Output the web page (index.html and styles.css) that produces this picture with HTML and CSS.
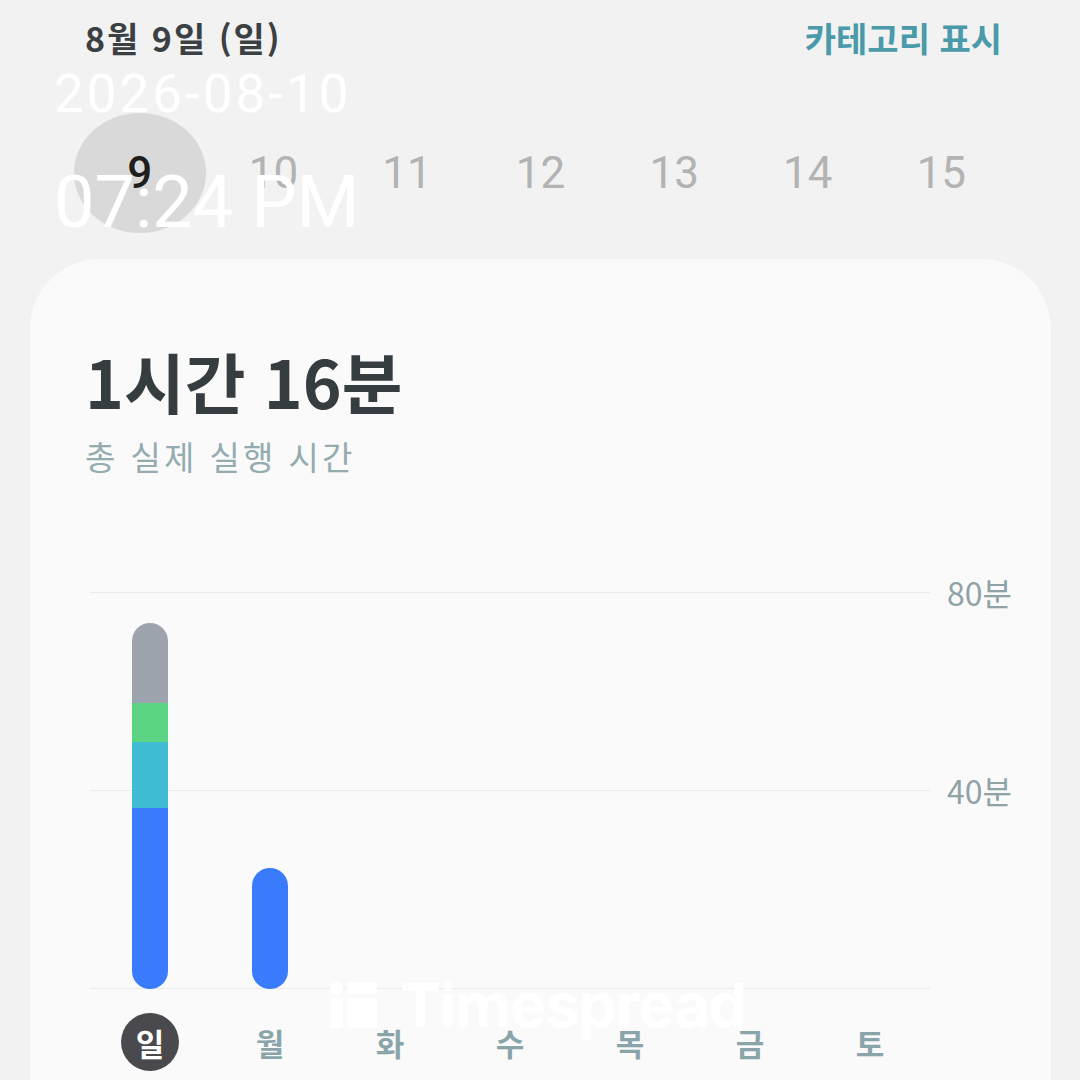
FILE: index.html
```html
<!DOCTYPE html>
<html lang="ko">

<head>
    <meta charset="UTF-8">
    <meta name="viewport" content="width=device-width, initial-scale=1.0">
    <title>Timespread</title>
    <link rel="stylesheet" href="styles.css">
</head>

<body>
    <div class="screen">
        <div class="header">
            <span class="header-date">8월 9일 (일)</span>
            <span class="header-action">카테고리 표시</span>
        </div>

        <div class="date-row">
            <div class="date-item selected"><span class="date-circle">9</span></div>
            <div class="date-item">10</div>
            <div class="date-item">11</div>
            <div class="date-item">12</div>
            <div class="date-item">13</div>
            <div class="date-item">14</div>
            <div class="date-item">15</div>
        </div>

        <div class="card">
            <h1 class="total">1시간 16분</h1>
            <p class="total-label">총 실제 실행 시간</p>

            <div class="chart">
                <div class="plot">
                    <div class="grid-lines">
                        <div class="grid-row"></div>
                        <div class="grid-row"></div>
                    </div>
                    <div class="bars">
                        <div class="bar-col">
                            <div class="bar" style="height: 366px;">
                                <div class="seg seg-gray" style="height: 80px;"></div>
                                <div class="seg seg-green" style="height: 39px;"></div>
                                <div class="seg seg-teal" style="height: 66px;"></div>
                                <div class="seg seg-blue" style="height: 181px;"></div>
                            </div>
                        </div>
                        <div class="bar-col">
                            <div class="bar" style="height: 121px;">
                                <div class="seg seg-blue" style="height: 121px;"></div>
                            </div>
                        </div>
                        <div class="bar-col"></div>
                        <div class="bar-col"></div>
                        <div class="bar-col"></div>
                        <div class="bar-col"></div>
                        <div class="bar-col"></div>
                    </div>
                </div>
                <div class="axis">
                    <span class="axis-label first">80분</span>
                    <span class="axis-label">40분</span>
                </div>
            </div>

            <div class="days">
                <span class="day today">일</span>
                <span class="day">월</span>
                <span class="day">화</span>
                <span class="day">수</span>
                <span class="day">목</span>
                <span class="day">금</span>
                <span class="day">토</span>
            </div>
        </div>

        <!-- overlays -->
        <div class="stamp">
            <div class="stamp-date">2026-08-10</div>
            <div class="stamp-time">07:24 PM</div>
        </div>

        <div class="watermark">
            <svg width="48" height="46" viewBox="0 0 48 46">
                <circle cx="6.5" cy="6.5" r="6.5" fill="#fff" />
                <rect x="0" y="16" width="13" height="30" rx="1" fill="#fff" />
                <rect x="17" y="0" width="30" height="12" rx="1" fill="#fff" />
                <rect x="17" y="16" width="30" height="30" rx="1" fill="#fff" />
            </svg>
            <span>Timespread</span>
        </div>
    </div>
</body>

</html>
```

FILE: styles.css
```css
body {
    margin: 0;
    padding: 0;
    background: #f2f2f2;
    font-family: "Noto Sans CJK KR", "Noto Sans", sans-serif;
}

.screen {
    position: relative;
    width: 1080px;
    height: 1080px;
    overflow: hidden;
}

.header {
    display: flex;
    justify-content: space-between;
    align-items: center;
    height: 74px;
    padding: 0 78px 0 85px;
}

.header-date {
    font-size: 34px;
    font-weight: bold;
    color: #3b4043;
    letter-spacing: 2px;
}

.header-action {
    font-size: 34px;
    font-weight: bold;
    color: #4a9aaa;
}

.date-row {
    display: flex;
    margin-top: 39px;
    padding-left: 73px;
    height: 120px;
}

.date-item {
    width: 133.6px;
    display: flex;
    align-items: center;
    justify-content: center;
    font-family: Roboto, sans-serif;
    font-size: 44px;
    color: #b3b3b3;
}

.date-circle {
    width: 132px;
    height: 120px;
    border-radius: 50%;
    background: #d9d9d9;
    color: #1e1e1e;
    font-weight: 500;
    display: flex;
    align-items: center;
    justify-content: center;
}

.card {
    margin: 26px 29px 0 30px;
    height: 900px;
    background: #fafafa;
    border-radius: 70px 70px 0 0;
    padding: 81px 0 0 55px;
}

.total {
    margin: 0;
    font-size: 66px;
    line-height: 80px;
    font-weight: bold;
    color: #363d40;
}

.total-label {
    margin: 16px 0 0;
    font-size: 33px;
    line-height: 40px;
    color: #94abb0;
    letter-spacing: 3px;
}

.chart {
    display: flex;
    margin-top: 116px;
    margin-left: 5px;
}

.plot {
    display: grid;
    width: 840px;
}

.grid-lines,
.bars {
    grid-area: 1 / 1;
}

.grid-row {
    height: 197px;
    border-top: 1px solid #ebebeb;
}

.grid-row:last-child {
    border-bottom: 1px solid #ebebeb;
}

.bars {
    display: flex;
    align-items: flex-end;
}

.bar-col {
    width: 120px;
    display: flex;
    justify-content: center;
    align-items: flex-end;
}

.bar {
    width: 36px;
    border-radius: 18px;
    overflow: hidden;
    display: flex;
    flex-direction: column;
}

.seg-gray {
    background: #9ea4ae;
}

.seg-green {
    background: #5bd583;
}

.seg-teal {
    background: #3fbcd4;
}

.seg-blue {
    background: #3a7bfd;
}

.axis {
    display: flex;
    flex-direction: column;
    padding-left: 17px;
}

.axis-label {
    font-size: 32px;
    line-height: 40px;
    color: #8fa3a7;
    margin-top: 158px;
}

.axis-label.first {
    margin-top: -20px;
}

.days {
    display: flex;
    margin: 24px 0 0 5px;
}

.day {
    width: 120px;
    display: flex;
    justify-content: center;
    align-items: center;
    height: 58px;
    font-size: 31px;
    font-weight: bold;
    color: #8aa5aa;
}

.day.today {
    color: #fff;
    background: #4a4a4e;
    border-radius: 50%;
    width: 58px;
    margin: 0 31px;
}

.stamp {
    position: absolute;
    top: 62px;
    left: 54px;
    color: #fff;
    font-family: Roboto, sans-serif;
}

.stamp-date {
    font-size: 53px;
    line-height: 64px;
    letter-spacing: 3px;
}

.stamp-time {
    font-size: 72px;
    line-height: 90px;
    margin-top: 32px;
}

.watermark {
    position: absolute;
    left: 330px;
    top: 968px;
    display: flex;
    align-items: center;
    gap: 22px;
    color: #fff;
    font-family: Inter, sans-serif;
    font-size: 61px;
    font-weight: bold;
    letter-spacing: -1px;
}
```
